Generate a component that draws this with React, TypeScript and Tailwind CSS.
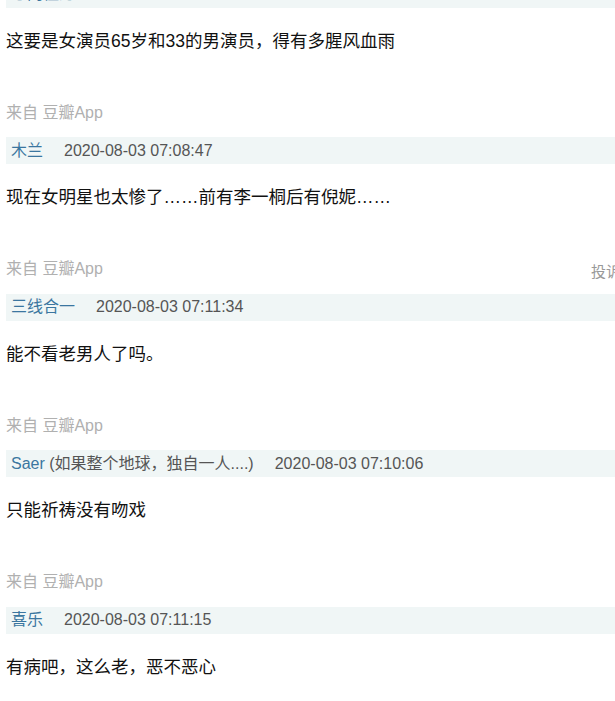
import React from "react";

type Item = { name: React.ReactNode; date: string; text: string; report?: boolean; top?: boolean };

const items: Item[] = [
  { name: "心向往之", date: "2020-08-03 07:05:21", text: "这要是女演员65岁和33的男演员，得有多腥风血雨", top: true },
  { name: "木兰", date: "2020-08-03 07:08:47", text: "现在女明星也太惨了……前有李一桐后有倪妮……", report: true },
  { name: "三线合一", date: "2020-08-03 07:11:34", text: "能不看老男人了吗。" },
  {
    name: (
      <>
        Saer <span className="text-[#555]">(如果整个地球，独自一人....)</span>
      </>
    ),
    date: "2020-08-03 07:10:06",
    text: "只能祈祷没有吻戏",
  },
  { name: "喜乐", date: "2020-08-03 07:11:15", text: "有病吧，这么老，恶不恶心" },
];

export default function App() {
  return (
    <div
      className="w-[615px] h-[701px] overflow-hidden bg-white"
      style={{ fontFamily: '"Liberation Sans", Arial, "Noto Sans CJK SC", sans-serif' }}
    >
      {items.map((it, i) => (
        <div key={i} className={it.top ? "-mt-[19.5px]" : ""}>
          <div className="ml-[6px] h-[27px] bg-[#f0f6f6] flex items-center pl-[5px] text-[16px] leading-[20px]">
            <span className="text-[#3b76a0]">{it.name}</span>
            <span className="ml-[21px] text-[#555]">{it.date}</span>
          </div>
          <div className="mt-[21px] pl-[6px] text-[17.5px] leading-[24px] text-[#111]">{it.text}</div>
          {i < items.length - 1 && (
            <div className="mt-[48px] mb-[12.5px] pl-[6px] w-[621px] h-[24px] flex items-center text-[16px] leading-[24px] text-[#b0b0b0]">
              <span>来自 豆瓣App</span>
              {it.report && <span className="ml-auto translate-y-[3px] text-[15px] leading-[24px] text-[#999]">投诉</span>}
            </div>
          )}
        </div>
      ))}
    </div>
  );
}
